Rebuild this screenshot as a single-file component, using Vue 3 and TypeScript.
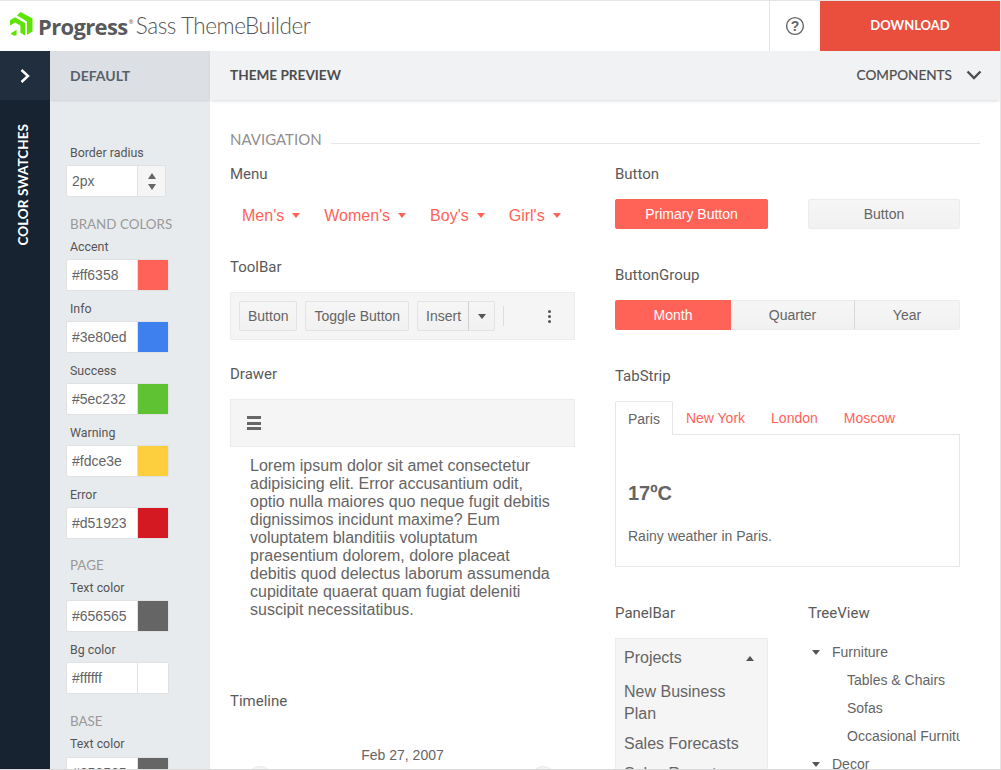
<script setup lang="ts">
interface Swatch { label: string; value: string; color: string }
const brand: Swatch[] = [
  { label: 'Accent', value: '#ff6358', color: '#ff6358' },
  { label: 'Info', value: '#3e80ed', color: '#3e80ed' },
  { label: 'Success', value: '#5ec232', color: '#5ec232' },
  { label: 'Warning', value: '#fdce3e', color: '#fdce3e' },
  { label: 'Error', value: '#d51923', color: '#d51923' },
]
const page: Swatch[] = [
  { label: 'Text color', value: '#656565', color: '#656565' },
  { label: 'Bg color', value: '#ffffff', color: '#ffffff' },
]
const base: Swatch[] = [{ label: 'Text color', value: '#656565', color: '#656565' }]
const menu = ["Men's", "Women's", "Boy's", "Girl's"]
const tabs = ['New York', 'London', 'Moscow']
</script>

<template>
  <div class="app">
    <header class="topbar">
      <div class="brand">
        <svg class="logo" width="24" height="24" viewBox="0 0 24 24">
          <path d="M10.7 0 L22.5 6.6 V19.6 L17 22.8 V9.4 L7 3.4 Z" fill="#5ce500" />
          <path d="M0 8.2 L5 5.2 L15 11 V23.4 L10.4 20.8 V13.6 L5 10.6 L0 13.4 Z" fill="#5ce500" />
          <path d="M0.5 21.5 L6.5 17.8 V23.4 H3.5 Z" fill="#5ce500" />
        </svg>
        <span class="brand-progress">Progress<sup class="reg">®</sup></span>
        <span class="brand-name">Sass ThemeBuilder</span>
      </div>
      <button class="help" aria-label="Help">
        <svg width="20" height="20" viewBox="0 0 20 20">
          <circle cx="10" cy="10" r="8.4" fill="none" stroke="#656565" stroke-width="1.4" />
          <text x="10" y="14.8" text-anchor="middle" class="help-q">?</text>
        </svg>
      </button>
      <button class="download">DOWNLOAD</button>
    </header>

    <div class="workspace">
      <aside class="rail">
        <div class="rail-toggle">
          <svg width="12" height="16" viewBox="0 0 12 16">
            <path d="M2.5 2 L9 8 L2.5 14" fill="none" stroke="#fff" stroke-width="2.4" />
          </svg>
        </div>
        <div class="rail-label">COLOR SWATCHES</div>
      </aside>

      <aside class="panel">
        <div class="panel-head">DEFAULT</div>
        <div class="panel-body">
          <label class="field-label">Border radius</label>
          <div class="spinner">
            <span class="spinner-value">2px</span>
            <span class="spinner-arrows">
              <i class="tri up big"></i>
              <i class="tri down big"></i>
            </span>
          </div>

          <h3 class="group-title first">BRAND COLORS</h3>
          <div v-for="s in brand" :key="s.label" class="swatch-row">
            <label class="field-label">{{ s.label }}</label>
            <div class="swatch-input">
              <span class="swatch-value">{{ s.value }}</span>
              <span class="swatch-color" :style="{ background: s.color }"></span>
            </div>
          </div>

          <h3 class="group-title">PAGE</h3>
          <div v-for="s in page" :key="s.label" class="swatch-row">
            <label class="field-label">{{ s.label }}</label>
            <div class="swatch-input">
              <span class="swatch-value">{{ s.value }}</span>
              <span class="swatch-color" :style="{ background: s.color }"></span>
            </div>
          </div>

          <h3 class="group-title base">BASE</h3>
          <div v-for="s in base" :key="s.label" class="swatch-row base-row">
            <label class="field-label">{{ s.label }}</label>
            <div class="swatch-input">
              <span class="swatch-value">{{ s.value }}</span>
              <span class="swatch-color" :style="{ background: s.color }"></span>
            </div>
          </div>
        </div>
      </aside>

      <main class="main">
        <div class="main-head">
          <span class="main-title">THEME PREVIEW</span>
          <span class="main-components">COMPONENTS
            <svg width="16" height="10" viewBox="0 0 16 10">
              <path d="M1.5 1.5 L8 8 L14.5 1.5" fill="none" stroke="#4d4d4d" stroke-width="2.4" />
            </svg>
          </span>
        </div>

        <div class="main-body">
          <div class="nav-heading"><span>NAVIGATION</span><i></i></div>

          <div class="columns">
            <div class="col">
              <h4 class="demo-title">Menu</h4>
              <ul class="menu">
                <li v-for="m in menu" :key="m">{{ m }}<i class="tri down accent"></i></li>
              </ul>

              <h4 class="demo-title toolbar-title">ToolBar</h4>
              <div class="toolbar">
                <span class="btn">Button</span>
                <span class="btn">Toggle Button</span>
                <span class="split">
                  <span class="split-main">Insert</span>
                  <span class="split-arrow"><i class="tri down dark"></i></span>
                </span>
                <i class="tb-sep"></i>
                <span class="tb-more"><i></i><i></i><i></i></span>
              </div>

              <h4 class="demo-title drawer-title">Drawer</h4>
              <div class="drawer-bar">
                <span class="burger"><i></i><i></i><i></i></span>
              </div>
              <p class="lorem">Lorem ipsum dolor sit amet consectetur adipisicing elit. Error accusantium odit, optio nulla maiores quo neque fugit debitis dignissimos incidunt maxime? Eum voluptatem blanditiis voluptatum praesentium dolorem, dolore placeat debitis quod delectus laborum assumenda cupiditate quaerat quam fugiat deleniti suscipit necessitatibus.</p>

              <h4 class="demo-title timeline-title">Timeline</h4>
              <div class="timeline">
                <span class="tl-date">Feb 27, 2007</span>
                <div class="tl-track">
                  <span class="tl-dot"></span>
                  <span class="tl-dot"></span>
                </div>
              </div>
            </div>

            <div class="col">
              <h4 class="demo-title">Button</h4>
              <div class="button-row">
                <span class="push primary">Primary Button</span>
                <span class="push">Button</span>
              </div>

              <h4 class="demo-title group-demo">ButtonGroup</h4>
              <div class="btn-group">
                <span class="bg-item active month">Month</span>
                <span class="bg-item quarter">Quarter</span>
                <span class="bg-item year">Year</span>
              </div>

              <h4 class="demo-title tab-demo">TabStrip</h4>
              <div class="tabstrip">
                <div class="tabs">
                  <span class="tab active">Paris</span>
                  <span v-for="t in tabs" :key="t" class="tab">{{ t }}</span>
                </div>
                <div class="tab-body">
                  <div class="temp">17ºC</div>
                  <div class="weather">Rainy weather in Paris.</div>
                </div>
              </div>

              <div class="duo">
                <div class="duo-col">
                  <h4 class="demo-title">PanelBar</h4>
                  <div class="panelbar">
                    <div class="pb-head">Projects<i class="tri up dark"></i></div>
                    <div class="pb-item">New Business Plan</div>
                    <div class="pb-item">Sales Forecasts</div>
                    <div class="pb-item">Sales Reports</div>
                  </div>
                </div>
                <div class="duo-col">
                  <h4 class="demo-title">TreeView</h4>
                  <div class="tree">
                    <div class="tree-row top"><i class="tri down dark"></i>Furniture</div>
                    <div class="tree-row child">Tables &amp; Chairs</div>
                    <div class="tree-row child">Sofas</div>
                    <div class="tree-row child">Occasional Furniture</div>
                    <div class="tree-row top"><i class="tri down dark"></i>Decor</div>
                  </div>
                </div>
              </div>
            </div>
          </div>
        </div>
      </main>
    </div>
  </div>
</template>

<style>
html, body { margin: 0; overflow: hidden; background: #fff; }
</style>

<style scoped>
* { box-sizing: border-box; }
.app {
  width: 1001px;
  height: 770px;
  display: flex;
  flex-direction: column;
  overflow: hidden;
  border-top: 1px solid #e4e4e4;
  border-right: 1px solid #e4e4e4;
  border-bottom: 1px solid #d8d8d8;
  font-family: "Liberation Sans", Arial, sans-serif;
  color: #656565;
  background: #fff;
}
.topbar {
  height: 50px;
  flex: none;
  display: flex;
  align-items: stretch;
}
.brand {
  flex: 1;
  display: flex;
  align-items: center;
  padding: 0 0 1px 10px;
  color: #58595b;
}
.logo { margin: 0 4px 4px 0; }
.brand-progress {
  font-family: "Open Sans", sans-serif;
  font-weight: 700;
  font-size: 22px;
  letter-spacing: -0.65px;
}
.reg { font-size: 6px; vertical-align: 11px; line-height: 0; margin-left: 1px; font-weight: 400; }
.brand-name {
  font-family: "Lato", sans-serif;
  font-weight: 300;
  font-size: 22.5px;
  letter-spacing: -0.45px;
  margin-left: 3px;
  color: #555;
}
.help {
  width: 51px;
  border: 0;
  border-left: 1px solid #e4e4e4;
  background: #fff;
  padding: 0;
  display: flex;
  align-items: center;
  justify-content: center;
}
.help-q { font: 700 14px "Liberation Sans", sans-serif; fill: #656565; }
.download {
  width: 180px;
  border: 0;
  padding: 0 0 2px;
  background: #ea4f3d;
  color: #fff;
  font: 700 13px "Lato", sans-serif;
}
.workspace { flex: 1; display: flex; min-height: 0; }
.rail {
  width: 50px;
  flex: none;
  background: #172331;
  display: flex;
  flex-direction: column;
  align-items: center;
}
.rail-toggle {
  width: 50px;
  height: 49px;
  flex: none;
  background: #212e3d;
  display: flex;
  align-items: center;
  justify-content: center;
}
.rail-label {
  margin: 24px 4px 0 0;
  writing-mode: vertical-rl;
  transform: rotate(180deg);
  color: #fff;
  font: 700 13.6px "Lato", sans-serif;
  line-height: 16px;
}
.panel {
  width: 160px;
  flex: none;
  background: #e8ebee;
  overflow: hidden;
}
.panel-head {
  height: 49px;
  display: flex;
  align-items: center;
  padding-left: 20px;
  background: #dce0e4;
  box-shadow: 0 2px 2px -1px rgba(0, 0, 0, 0.1);
  font: 700 14px "Lato", sans-serif;
  color: #58606a;
}
.panel-body { padding: 45px 0 0 16px; }
.field-label {
  display: block;
  margin-left: 4px;
  font: 400 12.4px/16px "Roboto", sans-serif;
  color: #555;
}
.spinner {
  margin-top: 4px;
  width: 100px;
  height: 32px;
  display: flex;
  border: 1px solid #dfe1e3;
  border-radius: 2px;
  background: #fff;
}
.spinner-value { flex: 1; font-size: 14px; line-height: 30px; padding-left: 5px; }
.spinner-arrows {
  width: 28px;
  background: #f5f5f5;
  border-left: 1px solid #dfe1e3;
  display: flex;
  flex-direction: column;
  align-items: center;
  justify-content: center;
  gap: 5px;
}
.tri { display: inline-block; width: 0; height: 0; border-left: 4px solid transparent; border-right: 4px solid transparent; }
.tri.up { border-bottom: 5px solid #656565; }
.tri.down { border-top: 5px solid #656565; }
.tri.big { border-left-width: 4.5px; border-right-width: 4.5px; }
.tri.up.big { border-bottom-width: 6px; }
.tri.down.big { border-top-width: 6px; }
.tri.down.accent { border-top-color: #ff6358; margin-left: 8px; vertical-align: 3px; }
.tri.dark { border-top-color: #555; border-bottom-color: #555; }
.group-title {
  margin: 17px 0 0 4px;
  font: 400 13.4px/18px "Lato", sans-serif;
  color: #999;
}
.group-title.first { margin-top: 18px; }
.group-title.base { margin-top: 18px; }
.swatch-row { margin-top: 10px; }
.group-title + .swatch-row { margin-top: 6px; }
.swatch-input {
  margin-top: 4px;
  width: 103px;
  height: 32px;
  display: flex;
  border: 1px solid #dfe1e3;
  border-radius: 2px;
  background: #fff;
}
.base-row .swatch-input { margin-top: 5px; }
.swatch-value { width: 71px; font-size: 14px; line-height: 30px; padding-left: 5px; border-right: 1px solid #dfe1e3; }
.swatch-color { flex: 1; }
.main { flex: 1; min-width: 0; display: flex; flex-direction: column; }
.main-head {
  height: 49px;
  flex: none;
  display: flex;
  align-items: center;
  justify-content: space-between;
  padding: 0 18px 2px 20px;
  background: #f1f2f4;
  box-shadow: 0 2px 3px -1px rgba(0, 0, 0, 0.15);
  color: #4d4d4d;
  font: 700 13.6px "Lato", sans-serif;
}
.main-components { display: flex; align-items: center; gap: 14px; font-weight: 400; -webkit-text-stroke: 0.2px #4d4d4d; }
.main-body { flex: 1; overflow: hidden; padding: 29px 20px 0; }
.nav-heading {
  display: flex;
  align-items: center;
  gap: 9px;
  font: 400 15px/20px "Lato", sans-serif;
  color: #8f8f8f;
}
.nav-heading i { flex: 1; height: 1px; background: #e6e6e6; margin-top: 9px; }
.columns { display: grid; grid-template-columns: 345px 345px; column-gap: 40px; margin-top: 15px; }
.demo-title {
  margin: 0;
  font: 400 15px/20px "Roboto", sans-serif;
  color: #5a5a5a;
}
.menu {
  list-style: none;
  margin: 0;
  padding: 0 0 0 12px;
  display: flex;
  gap: 24px;
  height: 63px;
  margin-top: 10px;
  padding-top: 12px;
  color: #ff6358;
  font-size: 16px;
  line-height: 20px;
}
.toolbar-title { margin-top: 0; }
.toolbar {
  margin-top: 15px;
  height: 48px;
  display: flex;
  align-items: center;
  gap: 8px;
  padding: 0 8px;
  background: #f5f5f5;
  border: 1px solid #ececec;
}
.btn, .split {
  height: 30px;
  border: 1px solid #e3e3e3;
  border-radius: 2px;
  background: linear-gradient(#f6f6f6, #f1f1f1);
  font-size: 14px;
  line-height: 28px;
  color: #656565;
}
.btn { padding: 0 8px; }
.split { display: flex; }
.split-main { padding: 0 7px 0 8px; border-right: 1px solid #d0d0d0; }
.split-arrow { width: 25px; display: flex; align-items: center; justify-content: center; }
.tb-sep { width: 1px; height: 20px; background: #dedede; }
.tb-more { margin-left: 36px; display: flex; flex-direction: column; gap: 2px; }
.tb-more i { width: 3px; height: 3px; border-radius: 50%; background: #555; }
.drawer-title { margin-top: 24px; }
.drawer-bar {
  margin-top: 15px;
  height: 48px;
  display: flex;
  align-items: center;
  padding-left: 16px;
  background: #f5f5f5;
  border: 1px solid #ececec;
}
.burger { display: flex; flex-direction: column; gap: 2.5px; }
.burger i { width: 14px; height: 3px; background: #666; }
.lorem {
  margin: 10px 0 0;
  padding: 0 20px;
  font-size: 16px;
  line-height: 18px;
  color: #656565;
}
.timeline-title { margin-top: 72px; }
.timeline { margin-top: 35px; position: relative; }
.tl-date { display: block; text-align: center; font-size: 14px; line-height: 18px; }
.tl-track { display: flex; justify-content: space-between; padding: 0 19px 0 17px; margin-top: 2px; }
.tl-dot { width: 26px; height: 26px; border-radius: 50%; background: #f5f5f5; border: 1px solid #e8e8e8; }
.button-row { display: flex; margin-top: 15px; width: 345px; justify-content: space-between; }
.push {
  width: 153px;
  height: 30px;
  display: flex;
  align-items: center;
  justify-content: center;
  font-size: 14px;
  color: #656565;
  background: linear-gradient(#f6f6f6, #f1f1f1);
  border: 1px solid #ececec;
  border-radius: 2px;
}
.push:last-child { width: 152px; }
.push.primary { background: #ff6358; border-color: #ff6358; color: #fff; }
.group-demo { margin-top: 36px; }
.btn-group { display: flex; margin-top: 15px; height: 30px; width: 345px; font-size: 14px; }
.bg-item {
  display: flex;
  align-items: center;
  justify-content: center;
  background: linear-gradient(#f6f6f6, #f1f1f1);
  border: 1px solid #ececec;
  border-left: 0;
}
.bg-item.active { background: #ff6358; color: #fff; border: 0; border-radius: 2px 0 0 2px; }
.month { width: 116px; }
.quarter { width: 124px; border-right-color: #d8d8d8; }
.year { width: 105px; border-radius: 0 2px 2px 0; }
.tab-demo { margin-top: 36px; }
.tabstrip { margin-top: 15px; }
.tabs { display: flex; height: 34px; font-size: 14px; color: #ff6358; position: relative; z-index: 1; }
.tab { padding: 0 13px 0 13px; line-height: 34px; }
.tab.active { padding: 0 12px; border: 1px solid #e6e6e6; border-bottom: 0; background: #fff; color: #656565; height: 34px; border-radius: 2px 2px 0 0; }
.tab-body { height: 133px; margin-top: -1px; padding: 0 12px; border: 1px solid #e6e6e6; }
.temp { margin-top: 46px; font-size: 20px; line-height: 24px; font-weight: 700; }
.weather { margin-top: 22px; font-size: 14px; line-height: 18px; }
.duo { display: grid; grid-template-columns: 153px 152px; column-gap: 40px; margin-top: 36px; }
.panelbar {
  margin-top: 15px;
  background: #f5f5f5;
  border: 1px solid #ececec;
  padding: 0 8px;
  font-size: 16px;
  line-height: 22px;
  height: 160px;
}
.pb-head { height: 42px; padding: 2px 5px 6px 0; display: flex; align-items: center; justify-content: space-between; }
.pb-item { margin-bottom: 8px; }
.tree { margin-top: 15px; font-size: 14px; width: 152px; overflow: hidden; }
.tree-row { height: 28px; line-height: 28px; white-space: nowrap; display: flex; align-items: center; }
.tree-row.top .tri { margin: 0 12px 0 4px; }
.tree-row.child { padding-left: 39px; }
</style>
